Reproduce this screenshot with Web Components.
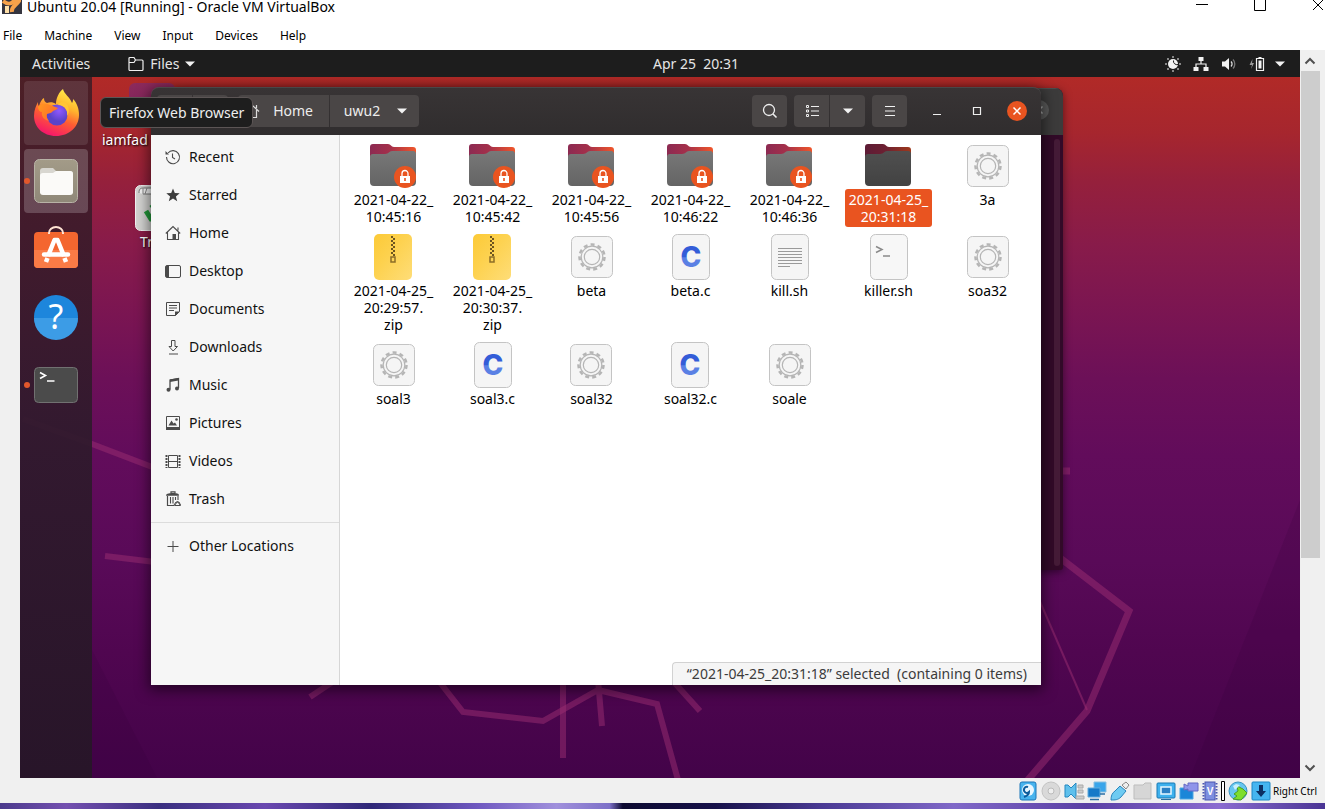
<!DOCTYPE html>
<html lang="en">
<head>
<meta charset="utf-8">
<title>Ubuntu 20.04 [Running] - Oracle VM VirtualBox</title>
<style>
html,body{margin:0;height:100%;overflow:hidden;background:#fff}
body{font-family:"Noto Sans","Open Sans",sans-serif;font-size:14px}
</style>
</head>
<body>
<vm-window></vm-window>
<script>
const ICONS = {
  /* guest top bar */
  folderLine:[16,16,'<path d="M1 13.500V2.500a1 1 0 0 1 1-1h4l1.500 2.500H14a1 1 0 0 1 1 1v8.500a1 1 0 0 1-1 1H2a1 1 0 0 1-1-1zM1 6.500h5L7.500 4" fill="none" stroke="#f0f0f0" stroke-width="1.200"/>'],
  down:[10,6,'<path d="M0 .5h10L5 5.500z" fill="#f2f2f2"/>'],
  night:[16,16,'<circle cx="8" cy="8" r="5" fill="#f2f2f2"/><path d="M8.500 4.500a3.500 3.500 0 0 0 4.500 4" stroke="#1d1d1d" stroke-width="1" fill="none"/><g fill="#aaa"><circle cx="8" cy="1" r="1"/><circle cx="8" cy="15" r="1"/><circle cx="1" cy="8" r="1"/><circle cx="15" cy="8" r="1"/><circle cx="3" cy="3" r="1"/><circle cx="13" cy="3" r="1"/><circle cx="3" cy="13" r="1"/><circle cx="13" cy="13" r="1"/></g>'],
  net:[16,16,'<path d="M5.500 1h5v4h-5zM.5 11h5v4h-5zM10.500 11h5v4h-5z" fill="#f2f2f2"/><path d="M8 5v3M3 11V8h10v3" fill="none" stroke="#f2f2f2" stroke-width="1.200"/>'],
  sound:[16,16,'<path d="M1 5.500h3L8 2v12L4 10.500H1z" fill="#f2f2f2"/><path d="M10 5.500a3.500 3.500 0 0 1 0 5" fill="none" stroke="#ddd" stroke-width="1.300"/><path d="M12 3.500a6.500 6.500 0 0 1 0 9" fill="none" stroke="#777" stroke-width="1.300"/>'],
  battery:[16,16,'<path d="M3.500 3L.5 9H3l-1 4 3-6H3z" fill="#999"/><path d="M7.500 2.500h7v12h-7z" fill="none" stroke="#f2f2f2" stroke-width="1.200"/><path d="M9.500 4.500h3v8h-3zM9.500 1h3v1.500h-3z" fill="#f2f2f2"/>'],
  /* header bar */
  search:[16,16,'<circle cx="7" cy="7" r="5.500" fill="none" stroke="#eee" stroke-width="1.300"/><path d="M11 11l3.500 3.500" stroke="#eee" stroke-width="1.600"/>'],
  list:[14,14,'<path d="M1.500 1.500h2v2h-2zM1.500 6h2v2h-2zM1.500 10.500h2v2h-2z" fill="none" stroke="#eee"/><path d="M6 2.500h8M6 7h8M6 11.500h8" stroke="#eee"/>'],
  menu:[12,12,'<path d="M1 1.500h10M1 6h10M1 10.500h10" stroke="#f2f2f2" stroke-width="1.200"/>'],
  min:[10,10,'<path d="M1 8.500h8" stroke="#eee"/>'],
  max:[10,10,'<path d="M1.500 1.500h7v7h-7z" fill="none" stroke="#eee" stroke-width="1.200"/>'],
  close:[20,20,'<circle cx="10" cy="10" r="10" fill="#e95420"/><path d="M6.500 6.500l7 7m0-7l-7 7" stroke="#fff" stroke-width="1.500"/>'],
  closeDim:[20,20,'<circle cx="10" cy="10" r="10" fill="#5a5a5a"/><path d="M6.500 6.500l7 7m0-7l-7 7" stroke="#aaa" stroke-width="1.500"/>'],
  homeLight:[16,16,'<path d="M1 8.500L8 2l7 6.500M3.500 7v7.500h9V7M12.500 5V2" fill="none" stroke="#ddd" stroke-width="1.200"/>'],
  back:[8,12,'<path d="M6 1L1.500 6 6 11" fill="none" stroke="#aaa"/>'],
  forward:[8,12,'<path d="M2 1l4.500 5L2 11" fill="none" stroke="#aaa"/>'],
  /* places */
  recent:[16,16,'<path d="M3 4a6.500 6.500 0 1 1-1.500 4" fill="none" stroke="#4a4a4a" stroke-width="1.100"/><path d="M.5 2v3.500H4z" fill="#4a4a4a"/><path d="M7.500 4.500v4l2.500 1.500" fill="none" stroke="#4a4a4a" stroke-width="1.100"/>'],
  star:[16,16,'<path d="M8 1.500l1.800 4.600 4.900.2-3.800 3.100 1.300 4.800L8 11.500l-4.200 2.700 1.300-4.800L1.300 6.300l4.900-.2z" fill="#3d3d3d"/>'],
  home:[16,16,'<path d="M.8 8.500L8 1.500l7.200 7M2.500 7.500v7h11v-7M13 5.500V2.500" fill="none" stroke="#4a4a4a" stroke-width="1.100"/><path d="M7.500 9h3.500v5.500H7.500z" fill="#4a4a4a"/>'],
  desktop:[16,16,'<rect x=".5" y="2.500" width="15" height="12" rx="1.500" fill="none" stroke="#4a4a4a"/><path d="M1 3h3v11H1z" fill="#4a4a4a"/>'],
  documents:[16,16,'<path d="M1.500 1.500h13v9l-4 4h-9z" fill="none" stroke="#4a4a4a"/><path d="M4 4.500h8M4 7h8M4 9.500h5" stroke="#4a4a4a"/><path d="M10 15v-4.500h5z" fill="#4a4a4a"/>'],
  downloads:[16,16,'<path d="M6.500 1.500h3.500v6h2.500L8.200 12 4 7.500h2.500zM4 15h9" fill="none" stroke="#4a4a4a"/>'],
  music:[16,16,'<path d="M5 12.500V3l8.500-1.500V11" fill="none" stroke="#4a4a4a" stroke-width="1.300"/><path d="M5 2.500l8.500-1.500v2.500L5 5z" fill="#4a4a4a"/><circle cx="3.500" cy="12.800" r="2" fill="#4a4a4a"/><circle cx="12" cy="11.500" r="2" fill="#4a4a4a"/>'],
  pictures:[16,16,'<path d="M1.500 1.500h13v12h-13z" fill="none" stroke="#4a4a4a"/><path d="M1 12h14v3H1zM3.500 10.500l3-5 2 3 1.500-1 2 3z" fill="#4a4a4a"/><circle cx="11.500" cy="4.500" r="1.300" fill="#4a4a4a"/>'],
  videos:[16,16,'<path d="M3.500 2.500h9v12h-9zM3.500 8.500h9" fill="none" stroke="#4a4a4a"/><path d="M1.500 2v13M14.500 2v13" stroke="#4a4a4a" stroke-width="2" stroke-dasharray="2 1"/>'],
  trash:[16,16,'<path d="M6 2V.8h4V2M2.500 5v9.500H9" fill="none" stroke="#4a4a4a" stroke-width="1.200"/><path d="M1 4.800C1 3 3 2 8 2s6 1 6 2.800z" fill="#4a4a4a"/><path d="M5.500 6v6.500M8 6v6.500M10.500 6v3M13 5v4" stroke="#4a4a4a" stroke-width="1.100"/><path d="M9.500 14.500l3-4 3 4zM9 14l2-3h3l1.500 3" fill="none" stroke="#4a4a4a"/>'],
  plus:[16,16,'<path d="M2.500 8.500h11M8 3v11" stroke="#4a4a4a"/>'],
  /* file types */
  folder:[48,48,'<defs><linearGradient id="b"><stop offset="0" stop-color="#8c2a52"/><stop offset=".45" stop-color="#a5304a"/><stop offset="1" stop-color="#f0562a"/></linearGradient><linearGradient id="f" x2="0" y2="1"><stop offset="0" stop-color="#787878"/><stop offset="1" stop-color="#646464"/></linearGradient></defs><path d="M1 40V6a3 3 0 0 1 3-3h15c3 0 3 3 6 3h19a3 3 0 0 1 3 3v31z" fill="url(#b)"/><path d="M1 16a3 3 0 0 1 3-3h12c4 0 4-3 7-3h21a3 3 0 0 1 3 3v28a4 4 0 0 1-4 4H5a4 4 0 0 1-4-4z" fill="url(#f)"/>'],
  zip:[48,48,'<defs><linearGradient id="z" x2="1" y2="1"><stop offset="0" stop-color="#fcca37"/><stop offset=".4" stop-color="#fdd14d"/><stop offset="1" stop-color="#fedd78"/></linearGradient></defs><rect x="5" y="2" width="38" height="46" rx="5" fill="url(#z)"/><path d="M23 4v20" stroke="#6d5520" stroke-width="2" stroke-dasharray="2 2"/><path d="M25 6v18" stroke="#6d5520" stroke-width="2" stroke-dasharray="2 2"/><path d="M22 25h4v5h-4z" fill="none" stroke="#8c6d27" stroke-width="1.500"/>'],
  exe:[48,48,'<rect x="3.500" y="4.500" width="41" height="41" rx="5" fill="#f5f5f5" stroke="#c4c4c4"/><circle cx="24" cy="25" r="12.500" fill="none" stroke="#b5b5b5" stroke-width="2.500" stroke-dasharray="4 3.140"/><circle cx="24" cy="25" r="10.800" fill="#f5f5f5" stroke="#b5b5b5" stroke-width="1.200"/><circle cx="24" cy="25" r="7.700" fill="none" stroke="#b5b5b5" stroke-width="1.200"/>'],
  c:[48,48,'<defs><linearGradient id="c" x2="0" y2="1"><stop offset=".5" stop-color="#345dd8"/><stop offset=".52" stop-color="#5a80e4"/></linearGradient></defs><rect x="5.500" y="2.500" width="37" height="45" rx="5" fill="#f5f5f5" stroke="#c4c4c4"/><text x="24" y="35" text-anchor="middle" font-family="Inter,sans-serif" font-weight="800" font-size="28" fill="url(#c)">C</text>'],
  text:[48,48,'<rect x="5.500" y="2.500" width="37" height="45" rx="5" fill="#f5f5f5" stroke="#c4c4c4"/><path d="M12 16.500h24M12 19.500h24M12 22.500h24M12 25.500h24M12 28.500h24M12 31.500h24M12 34.500h12" stroke="#9a9a9a"/>'],
  script:[48,48,'<rect x="5.500" y="2.500" width="37" height="45" rx="5" fill="#f7f7f7" stroke="#c4c4c4"/><path d="M11 14.500l6 3-6 3M18 24h7" fill="none" stroke="#8a8a8a" stroke-width="1.500"/>'],
  lock:[22,22,'<circle cx="11" cy="11" r="11" fill="#e95420"/><path d="M8 10V7.500a3 3 0 0 1 6 0V10" fill="none" stroke="#fff" stroke-width="1.300"/><path d="M6 10h10v7H6z" fill="#fff"/><path d="M10.200 12h1.600v3h-1.600z" fill="#e95420"/>'],
  /* dock */
  firefox:[48,48,'<defs><linearGradient id="g" x1=".75" y1="0" x2=".35" y2="1"><stop offset="0" stop-color="#fff14a"/><stop offset=".35" stop-color="#ffb52e"/><stop offset=".62" stop-color="#ff5d32"/><stop offset="1" stop-color="#f5156c"/></linearGradient><radialGradient id="p" cx=".6" cy=".3"><stop offset="0" stop-color="#9059ff"/><stop offset="1" stop-color="#5a43c8"/></radialGradient><linearGradient id="h" x2="1" y2=".6"><stop offset="0" stop-color="#ff9a1f"/><stop offset="1" stop-color="#ff6a2b"/></linearGradient></defs><path d="M31 0c1 5 7 8 9 14 1-1 1-3 1-4 4 4 6 10 6 16 0 12-10 21-23 21S2 38 2 27c0-6 2-10 4-14 0 2 0 3 1 4 1-4 3-7 5-8 0 3 1 4 3 5 3-1 6-1 9 1 0-6 3-12 7-15z" fill="url(#g)"/><circle cx="25" cy="26" r="10.500" fill="url(#p)"/><path d="M6 18c3-4 8-4 12-2 3 1 5 2 8 3-1 2-4 2-5 3-1 2-4 2-6 3-1 2 0 5 2 7-5-1-8-5-7-9-2 0-4-2-4-5z" fill="url(#h)"/><path d="M26 16c7 0 10 5 9 11 3-4 2-10-1-13-3-2-6-1-8 2z" fill="#ffc636"/>'],
  files:[48,48,'<defs><linearGradient id="a" x2="0" y2="1"><stop offset="0" stop-color="#a39b88"/><stop offset="1" stop-color="#8f8878"/></linearGradient></defs><rect x="2.500" y="2.500" width="43" height="43" rx="5" fill="url(#a)" stroke="#b8b3a6"/><path d="M8 36V14a3 3 0 0 1 3-3h10l3 3h14a3 3 0 0 1 3 3v19z" fill="#d8d6d0"/><path d="M8 19a3 3 0 0 1 3-3h10l3-2h14a3 3 0 0 1 3 3v18a3 3 0 0 1-3 3H11a3 3 0 0 1-3-3z" fill="#fbfaf8"/>'],
  software:[48,48,'<rect x="2" y="7" width="44" height="36" rx="4" fill="#f4662f"/><path d="M2 25h44v14a4 4 0 0 1-4 4H6a4 4 0 0 1-4-4z" fill="#fa7b46"/><path d="M17 9V8a7 6 0 0 1 14 0v1" fill="none" stroke="#ffe3d3" stroke-width="2"/><path d="M16 31l6.500-16h3L32 31" fill="none" stroke="#fff" stroke-width="4.500" stroke-linejoin="round"/><path d="M12 29.500h24" stroke="#fff" stroke-width="4.500" stroke-linecap="round"/><path d="M15.500 33l-1.500 4M32.500 33l1.500 4" stroke="#fff" stroke-width="4.500"/>'],
  help:[48,48,'<circle cx="24" cy="24" r="22" fill="#1d86dc"/><path d="M2 25h44a22 22 0 0 1-44 0z" fill="#3c9ce6"/><text x="24" y="36" text-anchor="middle" font-family="Noto Sans,sans-serif" font-size="34" fill="#fff">?</text>'],
  terminal:[48,48,'<rect x="2.500" y="6.500" width="43" height="35" rx="4" fill="#4b4b4b" stroke="#717171"/><path d="M8 11.500l5.500 3L8 17.500M15 20h7.500" fill="none" stroke="#fff" stroke-width="1.600"/>'],
  /* desktop */
  homeBig:[48,48,'<defs><linearGradient id="d" x2="0" y2="1"><stop offset="0" stop-color="#8c2a5c"/><stop offset="1" stop-color="#76205a"/></linearGradient></defs><rect x="1" y="1" width="46" height="44" rx="6" fill="url(#d)"/>'],
  trashBig:[48,48,'<rect x="1.500" y="1.500" width="45" height="45" rx="5" fill="#d4d4d2" stroke="#f0f0f0"/><path d="M5 9c0-5 2-5 6-5h32v6H9" fill="#f4f4f4" stroke="#777"/><path d="M9 4v6M13 4l-2 6" stroke="#888"/><g fill="none" stroke="#229a3a" stroke-width="5"><path d="M17 24l5-4 5 4M12 27l5 8h5M31 25l4 6-6 4"/></g>'],
  /* host status bar */
  disk:[20,20,'<rect x="2" y="1" width="16" height="18" rx="2" fill="#48b4ee" stroke="#1c77b8"/><circle cx="10" cy="9" r="6" fill="#e9f7ff"/><path d="M10 6a3 3 0 1 0 1 5c0 3-2 4-5 5" stroke="#0d5d9c" stroke-width="2" fill="none"/>'],
  cd:[20,20,'<circle cx="10" cy="10" r="9" fill="#d9d9d9" stroke="#c3c3c3"/><circle cx="10" cy="10" r="3" fill="#eee" stroke="#bbb"/>'],
  audio:[20,20,'<path d="M1 4h3l3 3 5-5v16l-5-5-3 3H1z" fill="#5fc0ec" stroke="#2587c0"/><path d="M14 4h5v3h-5zM14 9h5v3h-5zM12 15h8v3h-8z" fill="#ccc" stroke="#aaa"/>'],
  lan:[20,20,'<path d="M7 1h12v10H7z" fill="#39a5ea" stroke="#8abfe0"/><path d="M1 7h12v9H1z" fill="#1579c8" stroke="#62acdc"/><path d="M3 18.500h9M13 13h5" stroke="#2a6fa5" stroke-width="1.500"/>'],
  usb:[20,20,'<path d="M12 4l4-3 3 3-3 4z" fill="#eee" stroke="#888"/><path d="M10 5l6 5-5 6c-3 3-6 3-10 3 0-4 1-7 4-9z" fill="#6ecbf2" stroke="#2a86bd"/>'],
  shared:[20,20,'<path d="M1 4h9l2-2h6v16H1z" fill="#d6d6d6" stroke="#bdbdbd"/>'],
  display:[20,20,'<rect x="1" y="2" width="18" height="15" rx="1" fill="#3eb1ee" stroke="#1978b3"/><path d="M5 6h10v7H5z" fill="#2b80c4" stroke="#e8f8ff" stroke-width="1.500"/><path d="M5 18.500h10" stroke="#2b6fa0"/>'],
  record:[20,20,'<path d="M1 7h13v11H1z" fill="#1a86d8" stroke="#4aa7e4"/><path d="M5 3l4 2V2h10v8H9V8L5 9z" fill="#8f95ea" stroke="#6468c4"/>'],
  cpu:[16,20,'<rect x="3" y="1" width="10" height="18" fill="#7d8fe0" stroke="#4b57b0"/><path d="M1.500 2v17M14.500 2v17" stroke="#4b57b0" stroke-width="2" stroke-dasharray="1.500 1.500"/><text x="8" y="14" text-anchor="middle" font-family="Liberation Sans,sans-serif" font-size="10" font-weight="700" fill="#fff">V</text>'],
  meter:[4,20,'<path d="M.5 .5h3v19h-3z" fill="#fff" stroke="#000"/>'],
  mouse:[20,20,'<circle cx="10" cy="10" r="9" fill="#65c6f0" stroke="#3792c0"/><path d="M9 5l6 3 4 4-6 7-8-1 4-3-3-2 4-3z" fill="#7dde2d" stroke="#4a9e22"/><path d="M5 5l3-2 4 1-5 5z" fill="#c9effc"/>'],
  hostkey:[20,20,'<rect x="1" y="1" width="18" height="18" rx="1" fill="#45b5f0" stroke="#1c86c4"/><path d="M8 4h4v6h3l-5 6-5-6h3z" fill="#0c2f62"/>'],
  /* host window */
  vbox:[20,20,'<path d="M0 0h20v19H0z" fill="#35353f"/><path d="M1 6c5 4 8 3 11 0l5-4v4c-3 5-8 5-7 11" fill="none" stroke="#f7a24a" stroke-width="4"/><path d="M3 11h4v7H3z" fill="#ffe0a8"/>'],
  hMin:[12,12,'<path d="M0 4.500h12" stroke="#000"/>'],
  hMax:[12,12,'<path d="M.5 -1.500h11v12H.5z" fill="none" stroke="#000"/>'],
  hClose:[12,12,'<path d="M1 0l10 10M11 0L1 10" stroke="#000"/>'],
  up:[12,8,'<path d="M1.500 6.500L6 2l4.500 4.500" fill="none" stroke="#505050" stroke-width="2"/>'],
  dn:[12,8,'<path d="M1.500 1.500L6 6l4.500-4.500" fill="none" stroke="#505050" stroke-width="2"/>']
};

const RESET = `*{box-sizing:border-box}
button{all:unset;box-sizing:border-box;cursor:default}
a{color:inherit;text-decoration:none}`;

class Base extends HTMLElement {
  constructor(){ super(); this.attachShadow({mode:'open'}); }
  connectedCallback(){ this.shadowRoot.innerHTML = `<style>${RESET}${this.css()}</style>${this.html()}`; }
}

class UiIcon extends Base {
  css(){ return ':host{display:inline-flex;flex:none}svg{display:block;overflow:visible}'; }
  html(){
    const [w,h,d] = ICONS[this.getAttribute('name')];
    return `<svg width="${w}" height="${h}" viewBox="0 0 ${w} ${h}" aria-hidden="true">${d}</svg>`;
  }
}
customElements.define('ui-icon', UiIcon);
const ic = n => `<ui-icon name="${n}"></ui-icon>`;

customElements.define('host-title', class extends Base {
  css(){ return `:host{display:flex;align-items:flex-start;height:22px;padding:0 1px 0 2px;color:#000;
      font-size:14px;line-height:14px}
    span{flex:1;margin-left:5px;white-space:nowrap}
    ui-icon[name=vbox]{margin-top:-5px}
    nav{display:flex;gap:46px}`; }
  html(){ return `${ic('vbox')}<span>Ubuntu 20.04 [Running] - Oracle VM VirtualBox</span>
    <nav><button aria-label="Minimize">${ic('hMin')}</button><button aria-label="Maximize">${ic('hMax')}</button><button aria-label="Close">${ic('hClose')}</button></nav>`; }
});

customElements.define('host-menu', class extends Base {
  css(){ return `:host{display:flex;gap:22px;height:28px;align-items:center;padding-left:3px;font-size:12px;line-height:18px;color:#000}`; }
  html(){ return ['File','Machine','View','Input','Devices','Help'].map(t=>`<button>${t}</button>`).join(''); }
});

customElements.define('host-scroll', class extends Base {
  css(){ return `:host{display:flex;flex-direction:column;width:25px;background:#f0f0f0}
    button{height:21px;width:20px;display:flex;align-items:center;justify-content:center}
    .track{flex:1;display:flex;flex-direction:column;width:19px;margin-left:1px}
    .thumb{flex:487;background:#cdcdcd}.rest{flex:199}`; }
  html(){ return `<button aria-label="Scroll up">${ic('up')}</button><div class="track"><div class="thumb"></div><div class="rest"></div></div><button aria-label="Scroll down">${ic('dn')}</button>`; }
});

customElements.define('host-status', class extends Base {
  css(){ return `:host{display:flex;justify-content:flex-end;align-items:center;gap:2px;height:25px;padding-right:8px;
      background:#f0f0f0;font-size:10px;line-height:16px;color:#000}
    .icons{display:flex;gap:3px}
    .key{white-space:nowrap}`; }
  html(){ return '<div class="icons">'+['disk','cd','audio','lan','usb','shared','display','record','cpu','meter','mouse','hostkey'].map(ic).join('')+'</div><span class="key">Right Ctrl</span>'; }
});

customElements.define('guest-bar', class extends Base {
  css(){ return `:host{display:grid;grid-template-columns:72px 1fr auto 1fr;align-items:center;height:27px;background:#1d1d1d;
      color:#e6e6e6;line-height:20px}
    .left{grid-column:1/3;display:flex;align-items:center;padding-left:12px;gap:38px}
    .files{display:flex;align-items:center;gap:6px}
    .tray{display:flex;justify-content:flex-end;align-items:center;gap:10px;padding-right:15px}
    .group{display:flex;gap:12px}
    time{white-space:pre}`; }
  html(){ return `<div class="left"><button>Activities</button><button class="files">${ic('folderLine')}<span>Files</span>${ic('down')}</button></div>
    <time>Apr 25  20:31</time>
    <div class="tray"><div class="group">${['night','net','sound','battery'].map(ic).join('')}</div>${ic('down')}</div>`; }
});

customElements.define('guest-dock', class extends Base {
  css(){ return `:host{display:flex;flex-direction:column;gap:4px;width:72px;padding:4px;
      background:linear-gradient(rgba(69,30,38,.93),rgba(61,27,42,.93) 20%,rgba(47,26,44,.93) 50%,rgba(38,22,39,.94))}
    button{position:relative;display:flex;align-items:center;justify-content:center;height:64px;border-radius:4px}
    .hover{background:rgba(255,255,255,.1)}.active{background:rgba(255,255,255,.2)}
    .running::before{content:"";position:absolute;left:0;top:29px;width:6px;height:6px;border-radius:3px;background:#e2572c}`; }
  html(){ return [['firefox','hover'],['files','active running'],['software',''],['help',''],['terminal','running']]
    .map(([n,c])=>`<button class="${c}" aria-label="${n}">${ic(n)}</button>`).join(''); }
});

customElements.define('desk-wallpaper', class extends Base {
  css(){ return `:host{display:block;background:linear-gradient(#b12a27,#a6262e 8%,#95203c 15%,#881b4a 24%,#7a1552 34%,#6c1058 43%,#620c5b 54%,#590a58 69%,#500650 82%,#430349)}
    svg{display:block;width:100%;height:100%}`; }
  html(){ return `<svg viewBox="20 77 1280 701" preserveAspectRatio="none" fill="none" stroke="#9b2d72" stroke-opacity=".5" stroke-width="6">
    <g stroke="none" fill="#30003a" fill-opacity=".16"><path d="M1300 500L1190 778h110zM1300 675L1205 778h95zM92 650l65 128H92z"/></g>
    <path d="M23 419L92 444 160 470M105 556l50 6M310 697l24-16"/>
    <path d="M1055 554l74 57-42 100-60 70M1055 471h15" stroke-width="7"/>
    <path d="M1035 590l52 120" stroke-width="2"/>
    <path d="M438 680l25 32 80 9 55-31 59 14 21 76M598 680l4 46M672 680l28 31"/><path d="M563 680v78"/></svg>`; }
});

customElements.define('desk-item', class extends Base {
  css(){ return `:host{display:flex;flex-direction:column;align-items:center;color:#fff;line-height:20px;text-shadow:1px 1px 2px #000}
    :host([start]) span{align-self:flex-start}`; }
  html(){ return `${ic(this.getAttribute('icon'))}<span><slot></slot></span>`; }
});

customElements.define('files-header', class extends Base {
  css(){ return `:host{display:flex;align-items:center;height:48px;padding:0 14px 1px 6px;background:linear-gradient(#383435,#302d2e);
      color:#ededed;line-height:20px;border-radius:8px 8px 0 0;border-top:1px solid #4a4748}
    button{display:flex;align-items:center;justify-content:center;height:32px;width:35px;background:#4a4646}
    .group{display:flex;gap:1px}.group button:first-child{border-radius:4px 0 0 4px}.group button:last-child{border-radius:0 4px 4px 0}
    .path{margin-left:10px;flex:1}
    .path .home{width:91px;gap:13px;justify-content:flex-end;padding-right:16px}
    .path .here{width:89px;gap:17px;padding-left:2px}
    .solo{border-radius:4px}
    .tools{display:flex;gap:7px}
    .win{display:flex;margin-left:20px;gap:20px}.win button{width:20px;background:none}`; }
  html(){ return `<div class="group"><button aria-label="Back">${ic('back')}</button><button aria-label="Forward">${ic('forward')}</button></div>
    <div class="group path"><button class="home">${ic('homeLight')}<span>Home</span></button><button class="here"><span>uwu2</span>${ic('down')}</button></div>
    <div class="tools"><button class="solo" aria-label="Search">${ic('search')}</button>
    <div class="group"><button aria-label="List view">${ic('list')}</button><button aria-label="View options">${ic('down')}</button></div>
    <button class="solo" aria-label="Menu">${ic('menu')}</button></div>
    <div class="win"><button aria-label="Minimize">${ic('min')}</button><button aria-label="Maximize">${ic('max')}</button><button aria-label="Close">${ic('close')}</button></div>`; }
});

customElements.define('files-sidebar', class extends Base {
  css(){ return `:host{display:flex;flex-direction:column;width:189px;padding-top:3px;background:#f6f6f6;border-right:1px solid #d6d6d6;color:#111;line-height:20px}
    a{display:flex;align-items:center;gap:8px;height:38px;padding-left:14px}
    hr{width:100%;margin:4px 0;border:0;border-top:1px solid #dcdcdc}`; }
  html(){ const row=([n,t])=>`<a href="#${n}">${ic(n)}<span>${t}</span></a>`;
    return [['recent','Recent'],['star','Starred'],['home','Home'],['desktop','Desktop'],['documents','Documents'],['downloads','Downloads'],['music','Music'],['pictures','Pictures'],['videos','Videos'],['trash','Trash']].map(row).join('')+'<hr>'+row(['plus','Other Locations']); }
});

customElements.define('file-item', class extends Base {
  css(){ return `:host{display:flex;justify-content:center;color:#000;line-height:17px}
    button{display:flex;flex-direction:column;align-items:center;text-align:center}
    .pic{position:relative;display:flex}
    ui-icon[name=lock]{position:absolute;right:1px;bottom:1px}
    .label{padding:2px 4px;border-radius:3px;white-space:nowrap}
    :host([selected]) .label{background:#e95420;color:#fff}
    :host([selected]) .pic{filter:brightness(.66)}`; }
  html(){ return `<button><span class="pic">${ic(this.getAttribute('kind'))}${this.hasAttribute('locked')?ic('lock'):''}</span><span class="label"><slot></slot></span></button>`; }
});

customElements.define('files-grid', class extends Base {
  css(){ return `:host{position:relative;display:block;background:#fff}
    .grid{display:grid;grid-template-columns:repeat(7,1fr);row-gap:5px;padding:6px 4px}
    .note{position:absolute;right:0;bottom:0;height:23px;padding:0 14px;border:1px solid #d2d2d2;border-width:1px 0 0 1px;border-radius:4px 0 0 0;
      background:#f5f5f5;color:#3c3c3c;line-height:22px;white-space:pre}`; }
  html(){
    const f=(k,t,a='')=>`<file-item kind="${k}" ${a}>${t}</file-item>`;
    return `<div class="grid">${[
      ...['10:45:16','10:45:42','10:45:56','10:46:22','10:46:36'].map(t=>f('folder','2021-04-22_<br>'+t,'locked')),
      f('folder','2021-04-25_<br>20:31:18','selected'), f('exe','3a'),
      f('zip','2021-04-25_<br>20:29:57.<br>zip'), f('zip','2021-04-25_<br>20:30:37.<br>zip'),
      f('exe','beta'), f('c','beta.c'), f('text','kill.sh'), f('script','killer.sh'), f('exe','soa32'),
      f('exe','soal3'), f('c','soal3.c'), f('exe','soal32'), f('c','soal32.c'), f('exe','soale')].join('')}</div>
      <div class="note">“2021-04-25_20:31:18” selected  (containing 0 items)</div>`; }
});

customElements.define('files-window', class extends Base {
  css(){ return `:host{display:flex;flex-direction:column;border-radius:8px 8px 0 0;box-shadow:0 3px 14px 2px rgba(0,0,0,.55)}
    .body{flex:1;display:flex;min-height:0}files-grid{flex:1}`; }
  html(){ return '<files-header></files-header><div class="body"><files-sidebar></files-sidebar><files-grid></files-grid></div>'; }
});

customElements.define('terminal-window', class extends Base {
  css(){ return `:host{display:flex;flex-direction:column;border-radius:8px 8px 3px 3px;box-shadow:0 2px 8px rgba(0,0,0,.5);background:#320a28;overflow:hidden}
    header{display:flex;justify-content:flex-end;align-items:center;height:47px;padding-right:14px;background:#3c3b3b;border-top:1px solid #4d4c4c}
    .body{flex:1;display:flex;justify-content:flex-end;padding:4px 3px}
    .bar{width:6px;background:#451b37;border-radius:3px}`; }
  html(){ return `<header><button aria-label="Close">${ic('closeDim')}</button></header><div class="body"><div class="bar"></div></div>`; }
});

customElements.define('guest-desktop', class extends Base {
  css(){ return `:host{position:relative;display:block;overflow:hidden}
    .home,.trash,terminal-window,files-window,.tip{position:absolute}
    .home{left:10px;top:5px;width:100px}
    .trash{left:42px;top:107px}
    terminal-window{left:80px;right:237px;top:11px;bottom:208px}
    files-window{left:59px;right:259px;top:10px;bottom:93px}
    .tip{left:8px;top:20px;height:31px;padding:0 8px;border:1px solid #5c5555;border-radius:6px;background:#1e1e1e;color:#eee;line-height:30px;white-space:nowrap}`; }
  html(){ return `<desk-item class="home" icon="homeBig" start>iamfad</desk-item><desk-item class="trash" icon="trashBig">Trash</desk-item>
    <terminal-window></terminal-window><files-window></files-window><div class="tip" role="tooltip">Firefox Web Browser</div>`; }
});

customElements.define('guest-screen', class extends Base {
  css(){ return `:host{display:flex;flex-direction:column;min-width:0}
    .stage{position:relative;flex:1;display:flex;min-height:0}
    desk-wallpaper{position:absolute;inset:0}
    guest-dock{position:relative}guest-desktop{flex:1}`; }
  html(){ return '<guest-bar></guest-bar><div class="stage"><desk-wallpaper></desk-wallpaper><guest-dock></guest-dock><guest-desktop></guest-desktop></div>'; }
});

customElements.define('vm-window', class extends Base {
  css(){ return `:host{display:flex;flex-direction:column;height:100vh;background:#fff;overflow:hidden}
    .view{flex:1;display:flex;min-height:0;padding-left:20px;background:#f0f0f0}
    guest-screen{flex:1}
    .host{height:6px;background:linear-gradient(90deg,#4b3a8c,#7450b0 5%,#3a2f80 12%,#6a48b0 20%,#2f2878 28%,#6f58c0 36%,#a090dc 42%,#7d70c8 46%,#0c0a30 47%,#17114a 54%,#4a3a94 62%,#8068c8 72%,#5a3fa4 82%,#8a6cd0 92%,#4a3494)}`; }
  html(){ return '<host-title></host-title><host-menu></host-menu><div class="view"><guest-screen></guest-screen><host-scroll></host-scroll></div><host-status></host-status><div class="host"></div>'; }
});
</script>
</body>
</html>
